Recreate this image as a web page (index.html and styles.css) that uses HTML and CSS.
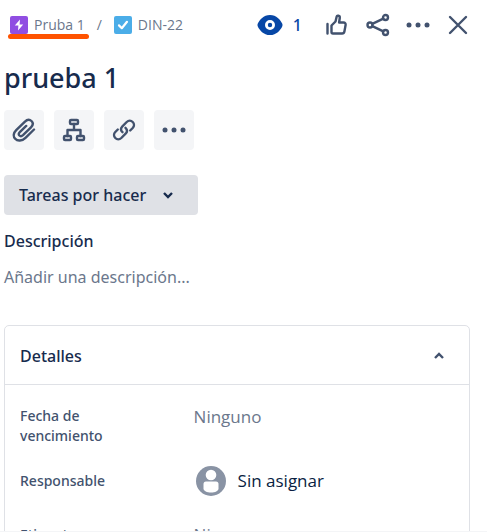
FILE: index.html
```html
<!DOCTYPE html>
<html lang="es">
<head>
<meta charset="utf-8">
<meta name="viewport" content="width=device-width, initial-scale=1">
<title>DIN-22 prueba 1</title>
<link rel="stylesheet" href="styles.css">
</head>
<body>
<main class="issue">
  <header class="topbar">
    <nav class="crumbs" aria-label="Ruta">
      <a class="crumb crumb-marked" href="#epic">
        <svg class="type-icon" viewBox="0 0 18 18" aria-hidden="true"><rect width="18" height="18" rx="2" fill="#904ee2"/><path d="M10 3.5 4.8 9.4h3.6L8 14.5l5.2-6H9.6z" fill="#fff"/></svg>
        <span>Pruba 1</span>
      </a>
      <span class="slash">/</span>
      <a class="crumb" href="#issue">
        <svg class="type-icon" viewBox="0 0 18 18" aria-hidden="true"><rect width="18" height="18" rx="2" fill="#4bade8"/><path d="m5 9.4 2.8 2.8L13 5.8" fill="none" stroke="#fff" stroke-width="2.2" stroke-linecap="round" stroke-linejoin="round"/></svg>
        <span>DIN-22</span>
      </a>
    </nav>
    <div class="actions">
      <button class="watch" type="button" aria-label="Observadores: 1">
        <svg width="26" height="22" viewBox="0 0 26 22" aria-hidden="true"><path d="M13 1C6.500 1 2.500 6 .8 9.600a3 3 0 0 0 0 2.800C2.500 16 6.500 21 13 21s10.500-5 12.200-8.600a3 3 0 0 0 0-2.800C23.500 6 19.500 1 13 1z" fill="#0747a6"/><circle cx="13" cy="11" r="3.600" fill="#0747a6" stroke="#fff" stroke-width="2.800"/></svg>
        <span>1</span>
      </button>
      <button class="icon-button" type="button" aria-label="Votar">
        <svg width="24" height="24" viewBox="0 0 24 24" class="line" aria-hidden="true"><path d="M1.500 11v9.500M5.500 12.500l4-4 1.200-5c.3-1.300 3.300-1.200 3.100 1.300L13.100 9.500h4.400c1.500 0 2.400 1 2.100 2.500l-1.200 6.500c-.2 1.200-1 2-2.300 2H7c-1 0-1.500-.6-1.500-1.500z"/></svg>
      </button>
      <button class="icon-button" type="button" aria-label="Compartir">
        <svg width="24" height="24" viewBox="0 0 24 24" class="line" aria-hidden="true"><circle cx="4" cy="12" r="2.500"/><circle cx="19.500" cy="4.500" r="2.500"/><circle cx="19.500" cy="19.500" r="2.500"/><path d="m6.300 10.800 11-5.200M6.300 13.200l11 5.200"/></svg>
      </button>
      <button class="icon-button" type="button" aria-label="Acciones">
        <svg width="24" height="24" viewBox="0 0 24 24" class="dots" aria-hidden="true"><circle cx="3" cy="12" r="2.500"/><circle cx="12" cy="12" r="2.500"/><circle cx="21" cy="12" r="2.500"/></svg>
      </button>
      <button class="icon-button" type="button" aria-label="Cerrar">
        <svg width="24" height="24" viewBox="0 0 24 24" class="line" aria-hidden="true"><path d="m4 4 16 16M20 4 4 20"/></svg>
      </button>
    </div>
  </header>

  <h1>prueba 1</h1>

  <div class="tools">
    <button class="tool" type="button" aria-label="Adjuntar">
      <svg width="24" height="24" viewBox="0 0 24 24" class="line" aria-hidden="true"><path d="m22 11.500-8.500 8.300c-3.500 3.400-8 3.600-10.300 1-2.300-2.500-1.700-6 1-8.700l8.500-8.300c2.300-2.300 5-2.500 6.800-.8 1.800 1.800 1.500 4.300-.5 6.300l-8 7.800c-1.300 1.200-2.700 1.300-3.600.4-.9-1-.7-2.300.4-3.400l6.400-6.200"/></svg>
    </button>
    <button class="tool" type="button" aria-label="Añadir incidencia secundaria">
      <svg width="24" height="24" viewBox="0 0 24 24" class="line" aria-hidden="true"><rect x="8" y="2" width="8" height="4" rx="1"/><rect x="2" y="18" width="7" height="4" rx="1"/><rect x="15" y="18" width="7" height="4" rx="1"/><path d="M12 6v6M5.500 18v-6h13v6"/></svg>
    </button>
    <button class="tool" type="button" aria-label="Enlazar incidencia">
      <svg width="24" height="24" viewBox="0 0 24 24" class="line" aria-hidden="true"><path d="M10.500 14.200c-1.800-1.800-1.800-4.200-.1-5.900l4.300-4.300c1.800-1.700 4.300-1.700 6 0s1.700 4.200 0 6l-2.500 2.500M13.500 9.800c1.800 1.800 1.800 4.200.1 5.900L9.300 20c-1.800 1.700-4.300 1.700-6 0s-1.700-4.200 0-6l2.500-2.500"/></svg>
    </button>
    <button class="tool" type="button" aria-label="Más">
      <svg width="24" height="24" viewBox="0 0 24 24" class="dots" aria-hidden="true"><circle cx="3" cy="12" r="2.500"/><circle cx="12" cy="12" r="2.500"/><circle cx="21" cy="12" r="2.500"/></svg>
    </button>
  </div>

  <button class="status" type="button">
    <span>Tareas por hacer</span>
    <svg width="12" height="12" viewBox="0 0 12 12" aria-hidden="true"><path d="m2 4 4 4 4-4"/></svg>
  </button>

  <h2>Descripción</h2>
  <p class="placeholder">Añadir una descripción...</p>

  <section class="details">
    <button class="details-head" type="button" aria-expanded="true">
      <span>Detalles</span>
      <svg width="12" height="12" viewBox="0 0 12 12" aria-hidden="true"><path d="m2 8 4-4 4 4"/></svg>
    </button>
    <dl class="fields">
      <div class="field">
        <dt>Fecha de vencimiento</dt>
        <dd class="empty">Ninguno</dd>
      </div>
      <div class="field field-single">
        <dt>Responsable</dt>
        <dd class="person">
          <svg width="30" height="30" viewBox="0 0 30 30" aria-hidden="true"><circle cx="15" cy="15" r="15" fill="#8993a4"/><circle cx="15" cy="9" r="5.300" fill="#fff"/><path d="M7.500 18a2.500 2.500 0 0 1 2.500-2.500h10a2.500 2.500 0 0 1 2.500 2.500v4.500c0 2.500-3.500 4-7.500 4s-7.500-1.500-7.500-4z" fill="#fff"/></svg>
          <span>Sin asignar</span>
        </dd>
      </div>
      <div class="field field-single">
        <dt>Etiquetas</dt>
        <dd class="empty">Ninguno</dd>
      </div>
    </dl>
  </section>
</main>
</body>
</html>
```

FILE: styles.css
```css
* {
  box-sizing: border-box;
}

body {
  margin: 0;
  background: #fff;
  color: #172b4d;
  font: 16px/24px "Noto Sans", "Open Sans", sans-serif;
}

button {
  padding: 0;
  border: 0;
  background: none;
  color: inherit;
  font: inherit;
}

svg {
  flex: none;
  display: block;
}

.line {
  fill: none;
  stroke: #42526e;
  stroke-width: 2.400;
  stroke-linecap: round;
  stroke-linejoin: round;
}

.dots {
  fill: #42526e;
}

.issue {
  height: 100vh;
  overflow: hidden;
  padding: 0 17px 0 4px;
  border-bottom: 1px solid #f4f5f7;
}

.topbar {
  display: flex;
  align-items: center;
  justify-content: space-between;
  height: 50px;
}

.crumbs,
.crumb {
  display: flex;
  align-items: center;
}

.crumbs {
  gap: 12px;
  padding-left: 6px;
  color: #6b778c;
  font-family: "Open Sans", "Noto Sans", sans-serif;
  font-size: 14px;
}

.crumb {
  position: relative;
  gap: 6px;
  color: inherit;
  text-decoration: none;
}

.crumb-marked::after {
  content: "";
  position: absolute;
  left: -2px;
  right: -4px;
  bottom: -2px;
  height: 5px;
  border-radius: 3px;
  background: #ff5300;
}

.type-icon {
  width: 18px;
  height: 18px;
}

.actions {
  display: flex;
  align-items: center;
  gap: 16px;
}

.watch {
  display: flex;
  align-items: center;
  gap: 10px;
  margin-right: 8px;
  color: #0747a6;
  font-weight: 500;
}

h1 {
  margin: 8px 0 12px;
  font-size: 27px;
  font-weight: 500;
  line-height: 40px;
}

.tools {
  display: flex;
  gap: 10px;
}

.tool {
  display: grid;
  place-items: center;
  width: 40px;
  height: 40px;
  border-radius: 4px;
  background: #f4f5f7;
}

.status {
  display: flex;
  align-items: center;
  gap: 16px;
  height: 40px;
  margin-top: 25px;
  padding: 0 24px 0 15px;
  border-radius: 4px;
  background: #dfe1e6;
  font-weight: 500;
}

.status svg,
.details-head svg {
  fill: none;
  stroke: #172b4d;
  stroke-width: 2.400;
}

.details-head svg {
  stroke: #42526e;
}

h2 {
  margin: 14px 0 12px;
  font-size: 16px;
  font-weight: 500;
}

.placeholder {
  margin: 0;
  color: #6b778c;
}

.details {
  margin-top: 36px;
  border: 1px solid #dfe1e6;
  border-radius: 5px;
}

.details-head {
  display: flex;
  align-items: center;
  justify-content: space-between;
  width: 100%;
  height: 59px;
  padding: 2px 24px 0 15px;
  border-bottom: 1px solid #dfe1e6;
  font-weight: 500;
}

.fields {
  display: grid;
  gap: 16px;
  margin: 0;
  padding: 21px 15px;
}

.field {
  display: grid;
  grid-template-columns: 2fr 3fr;
  align-items: start;
}

.field-single {
  align-items: center;
  min-height: 38px;
}

dt {
  max-width: 110px;
  color: #42526e;
  font-size: 14px;
  font-weight: 500;
  line-height: 20px;
}

dd {
  margin: 0;
  font-family: "Open Sans", "Noto Sans", sans-serif;
  font-size: 17px;
  line-height: 22px;
}

.empty {
  color: #6b778c;
}

.person {
  display: flex;
  align-items: center;
  gap: 12px;
  padding-left: 2px;
  color: #091e42;
}
```
